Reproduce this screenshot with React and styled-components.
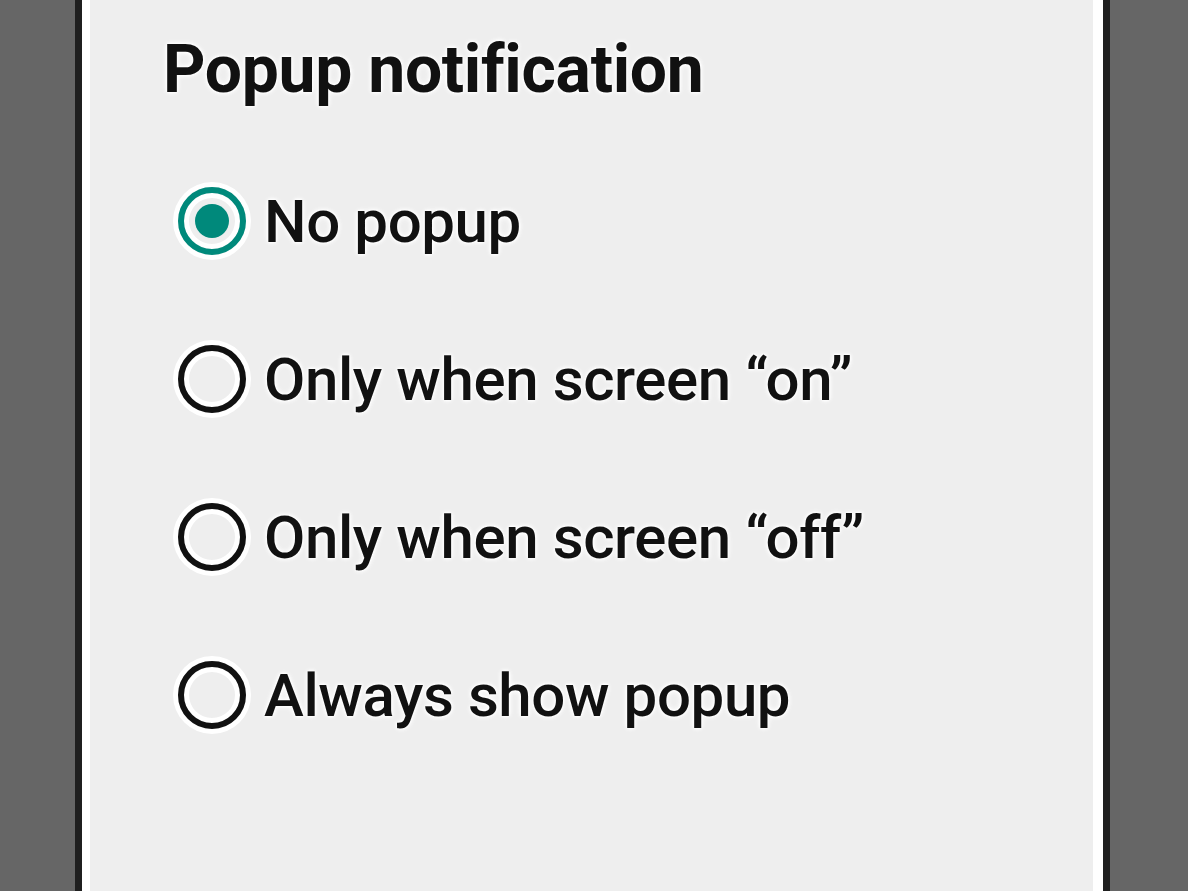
import React from 'react';
import styled, { createGlobalStyle } from 'styled-components';

const GlobalStyle = createGlobalStyle`
  html, body {
    margin: 0;
    padding: 0;
    background: #666666;
  }
  body {
    font-family: Roboto, "Noto Sans", sans-serif;
  }
`;

const Backdrop = styled.div`
  height: 891px;
  display: flex;
  padding-left: 75px;
  overflow: hidden;
  background: #666666;
`;

const DialogFrame = styled.div`
  width: 1021px;
  border-left: 7px solid #1f1f1f;
  border-right: 7px solid #1f1f1f;
`;

const Dialog = styled.div`
  height: 100%;
  box-sizing: border-box;
  background: #eeeeee;
  border-left: 8px solid #ffffff;
  border-right: 10px solid #ffffff;
  padding: 30px 0 0 73px;
`;

const halo = `
  text-shadow:
    0 0 3px #fff, 0 0 3px #fff, 0 0 5px #fff, 0 0 6px #fff;
`;

const Title = styled.h1`
  margin: 0 0 77px;
  font-size: 66px;
  font-weight: 700;
  line-height: 80px;
  color: #111;
  letter-spacing: -0.3px;
  ${halo}
`;

const Options = styled.div`
  display: flex;
  flex-direction: column;
  gap: 90px;
`;

const Option = styled.label`
  display: flex;
  align-items: center;
  gap: 18px;
  height: 68px;
  margin-left: 15px;
  font-size: 60px;
  font-weight: 500;
  color: #111;
  letter-spacing: -0.4px;
  ${halo}
`;

const Radio = styled.span`
  flex: none;
  width: 56px;
  height: 56px;
  border-radius: 50%;
  border: 6px solid ${p => (p.$checked ? '#00897b' : '#111')};
  display: flex;
  align-items: center;
  justify-content: center;
  box-shadow: 0 0 0 5px #fff, inset 0 0 0 5px #fff;
  &::after {
    content: '';
    width: 34px;
    height: 34px;
    border-radius: 50%;
    background: #00897b;
    display: ${p => (p.$checked ? 'block' : 'none')};
  }
`;

const options = [
  'No popup',
  'Only when screen \u201Con\u201D',
  'Only when screen \u201Coff\u201D',
  'Always show popup',
];

export default function App() {
  return (
    <>
      <GlobalStyle />
      <Backdrop>
        <DialogFrame>
          <Dialog>
            <Title>Popup notification</Title>
            <Options>
              {options.map((text, i) => (
                <Option key={text}>
                  <Radio $checked={i === 0} />
                  {text}
                </Option>
              ))}
            </Options>
          </Dialog>
        </DialogFrame>
      </Backdrop>
    </>
  );
}
